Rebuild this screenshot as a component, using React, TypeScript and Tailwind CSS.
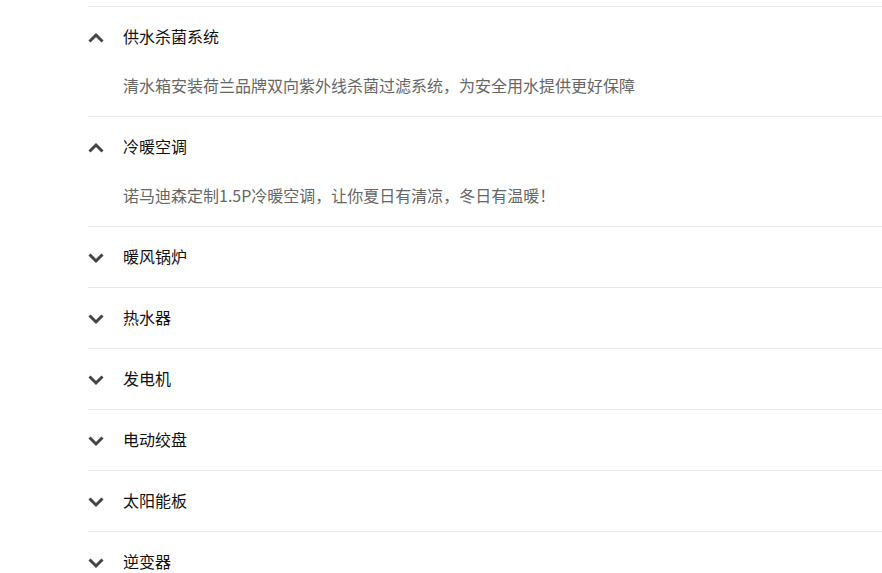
import { useState } from 'react';

const items = [
  { title: '供水杀菌系统', desc: '清水箱安装荷兰品牌双向紫外线杀菌过滤系统，为安全用水提供更好保障' },
  { title: '冷暖空调', desc: '诺马迪森定制1.5P冷暖空调，让你夏日有清凉，冬日有温暖！' },
  { title: '暖风锅炉', desc: '' },
  { title: '热水器', desc: '' },
  { title: '发电机', desc: '' },
  { title: '电动绞盘', desc: '' },
  { title: '太阳能板', desc: '' },
  { title: '逆变器', desc: '' },
];

function Chevron({ up }: { up: boolean }) {
  return (
    <svg width="16" height="16" viewBox="0 0 16 16" className="shrink-0 translate-y-[1.5px]">
      <path
        d={up ? 'M1.5 12 L8 5.5 L14.5 12' : 'M1.5 5 L8 11.5 L14.5 5'}
        fill="none"
        stroke="#444"
        strokeWidth="3"
      />
    </svg>
  );
}

export default function App() {
  const [open, setOpen] = useState<number[]>([0, 1]);

  const toggle = (i: number) =>
    setOpen((o) => (o.includes(i) ? o.filter((x) => x !== i) : [...o, i]));

  return (
    <div
      className="h-[573px] overflow-hidden bg-white pt-[6px] pl-[88px]"
      style={{ fontFamily: '"Microsoft YaHei", "Noto Sans CJK SC", sans-serif' }}
    >
      {items.map((item, i) => {
        const isOpen = open.includes(i);
        return (
          <div key={item.title} className="border-t border-[#e8e8e8]">
            <button
              onClick={() => toggle(i)}
              className="flex w-full items-center pt-[17px] pb-[19px] text-left"
            >
              <Chevron up={isOpen} />
              <span className="ml-[19px] text-[16px] leading-6 text-[#111]">{item.title}</span>
            </button>
            {isOpen && item.desc && (
              <p className="pl-[35px] pt-[6px] pb-[19px] text-[16px] leading-6 text-[#666]">
                {item.desc}
              </p>
            )}
          </div>
        );
      })}
    </div>
  );
}
